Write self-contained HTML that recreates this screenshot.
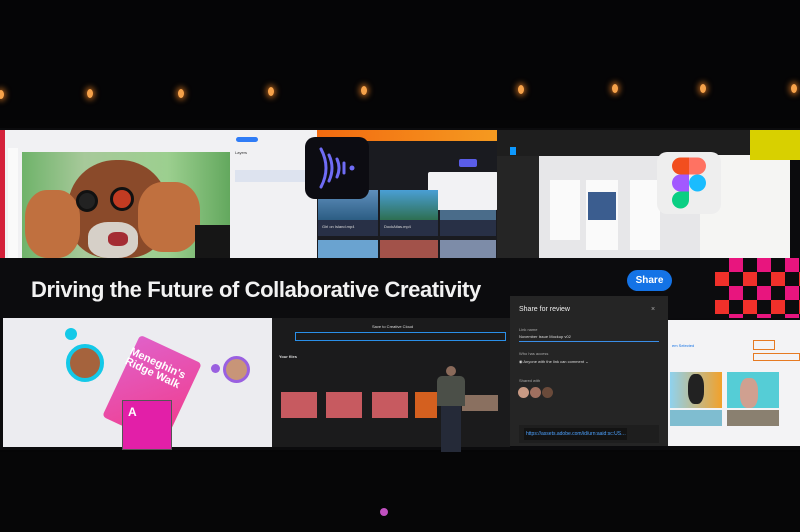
<!DOCTYPE html>
<html><head><meta charset="utf-8"><style>
*{margin:0;padding:0;box-sizing:border-box}
body{width:800px;height:532px;background:#050506;overflow:hidden;position:relative;font-family:"Liberation Sans",sans-serif}
.a{position:absolute}
.l{position:absolute;width:6px;height:9px;border-radius:50%;background:#f6a24a;box-shadow:0 0 6px 2px rgba(255,140,40,.6)}
.t{position:absolute;color:#ddd;font-size:4px;white-space:nowrap}
</style></head><body>
<div class="l" style="left:-2px;top:90px"></div>
<div class="l" style="left:87px;top:89px"></div>
<div class="l" style="left:178px;top:89px"></div>
<div class="l" style="left:268px;top:87px"></div>
<div class="l" style="left:361px;top:86px"></div>
<div class="l" style="left:518px;top:85px"></div>
<div class="l" style="left:612px;top:84px"></div>
<div class="l" style="left:700px;top:84px"></div>
<div class="l" style="left:791px;top:84px"></div>
<div class="a" style="left:0;top:128px;width:800px;height:322px;background:#0b0b0d"></div>
<div class="a" style="left:0;top:130px;width:5px;height:128px;background:#d4213a"></div>
<div class="a" style="left:5px;top:130px;width:312px;height:128px;background:#f1f1f3"></div>
<div class="a" style="left:236px;top:137px;width:22px;height:5px;background:#2f7cf6;border-radius:3px"></div>
<div class="a" style="left:8px;top:148px;width:10px;height:110px;background:#fafafa"></div>
<div class="a" style="left:22px;top:152px;width:208px;height:106px;background:linear-gradient(90deg,#6fb36a,#a7c99a 30%,#9ccf8f 70%,#63a85e)"></div>
<div class="a" style="left:68px;top:160px;width:100px;height:98px;border-radius:48% 48% 40% 40%;background:#8a4a2a"></div>
<div class="a" style="left:25px;top:190px;width:55px;height:68px;border-radius:40%;background:#c0703f"></div>
<div class="a" style="left:138px;top:182px;width:62px;height:70px;border-radius:40%;background:#c0703f"></div>
<div class="a" style="left:88px;top:222px;width:50px;height:36px;background:#d6d0c8;border-radius:40%"></div>
<div class="a" style="left:108px;top:232px;width:20px;height:14px;background:#a42c34;border-radius:40%"></div>
<div class="a" style="left:76px;top:190px;width:22px;height:22px;border-radius:50%;background:#222;border:3px solid #111"></div>
<div class="a" style="left:110px;top:187px;width:24px;height:24px;border-radius:50%;background:#c23b22;border:3px solid #111"></div>
<div class="a" style="left:195px;top:225px;width:35px;height:33px;background:#161616"></div>
<div class="t" style="left:235px;top:150px;color:#333">Layers</div>
<div class="a" style="left:235px;top:170px;width:70px;height:12px;background:#dde3ef"></div>
<div class="a" style="left:317px;top:130px;width:180px;height:11px;background:linear-gradient(90deg,#f26a10,#f59a20)"></div>
<div class="a" style="left:317px;top:141px;width:180px;height:117px;background:#1a1b20"></div>
<div class="a" style="left:459px;top:159px;width:18px;height:8px;background:#5a5de8;border-radius:2px"></div>
<div class="a" style="left:428px;top:172px;width:70px;height:38px;background:#f2f2f4;border-radius:2px"></div>
<div class="a" style="left:318px;top:190px;width:60px;height:30px;background:linear-gradient(#5f8fbd,#2c5d83)"></div>
<div class="a" style="left:380px;top:190px;width:58px;height:30px;background:linear-gradient(#4a9fd5,#2e6f51)"></div>
<div class="a" style="left:440px;top:210px;width:56px;height:10px;background:#4a6c8a"></div>
<div class="a" style="left:318px;top:220px;width:60px;height:16px;background:#283046"></div>
<div class="a" style="left:380px;top:220px;width:58px;height:16px;background:#283046"></div>
<div class="a" style="left:440px;top:220px;width:56px;height:16px;background:#283046"></div>
<div class="t" style="left:322px;top:224px">Girl on Island.mp4</div>
<div class="t" style="left:384px;top:224px">DockAtlas.mp4</div>
<div class="a" style="left:318px;top:240px;width:60px;height:18px;background:#6aa3d0"></div>
<div class="a" style="left:380px;top:240px;width:58px;height:18px;background:#a2524a"></div>
<div class="a" style="left:440px;top:240px;width:56px;height:18px;background:#7d8ca8"></div>
<div class="a" style="left:305px;top:137px;width:64px;height:62px;background:#0c0c12;border-radius:10px"></div>
<svg class="a" style="left:313px;top:145px" width="50" height="46" viewBox="0 0 50 46"><g fill="none" stroke="#6f6cf5" stroke-width="3" stroke-linecap="round"><path d="M8 4 Q18 23 8 42"/><path d="M16 10 Q22 23 16 36"/><path d="M24 14 Q28 23 24 32"/><path d="M31 18 V28"/></g><circle cx="39" cy="23" r="2.5" fill="#6f6cf5"/></svg>
<div class="a" style="left:497px;top:130px;width:253px;height:26px;background:#1e1e1e"></div>
<div class="a" style="left:510px;top:147px;width:6px;height:8px;background:#0d99ff"></div>
<div class="a" style="left:497px;top:156px;width:42px;height:102px;background:#252525"></div>
<div class="a" style="left:539px;top:156px;width:161px;height:102px;background:#e7e7e9"></div>
<div class="a" style="left:550px;top:180px;width:30px;height:60px;background:#fafafa"></div>
<div class="a" style="left:586px;top:180px;width:32px;height:70px;background:#fafafa"></div>
<div class="a" style="left:588px;top:192px;width:28px;height:28px;background:#3b5d8f"></div>
<div class="a" style="left:630px;top:180px;width:30px;height:70px;background:#fafafa"></div>
<div class="a" style="left:700px;top:155px;width:90px;height:103px;background:#f5f5f3"></div>
<div class="a" style="left:750px;top:130px;width:50px;height:30px;background:#d8d000"></div>
<div class="a" style="left:657px;top:152px;width:64px;height:62px;background:#eeeeee;border-radius:10px"></div>
<svg class="a" style="left:672px;top:157px" width="34" height="52" viewBox="0 0 34 51"><path d="M17 0H8.5a8.5 8.5 0 0 0 0 17H17z" fill="#f24e1e"/><path d="M17 0h8.5a8.5 8.5 0 0 1 0 17H17z" fill="#ff7262"/><path d="M17 17H8.5a8.5 8.5 0 0 0 0 17H17z" fill="#a259ff"/><circle cx="25.5" cy="25.5" r="8.5" fill="#1abcfe"/><path d="M17 34H8.5a8.5 8.5 0 1 0 8.5 8.5z" fill="#0acf83"/></svg>
<div class="a" style="left:0;top:258px;width:800px;height:60px;background:#0c0c0e"></div>
<div class="a" style="left:31px;top:277px;color:#f2f2f2;font-size:22px;font-weight:bold;letter-spacing:-.4px;white-space:nowrap">Driving the Future of Collaborative Creativity</div>
<div class="a" style="left:627px;top:270px;width:45px;height:21px;background:#1473e6;border-radius:11px;color:#fff;font-size:10px;font-weight:bold;text-align:center;line-height:21px">Share</div>
<div class="a" style="left:715px;top:258px;width:85px;height:60px;background:
conic-gradient(#e8157e 25%,#0c0c0e 0 50%,#f0302a 0 75%,#0c0c0e 0) 0 0/28px 28px"></div>
<div class="a" style="left:3px;top:318px;width:269px;height:129px;background:#ececf0"></div>
<div class="a" style="left:65px;top:328px;width:12px;height:12px;border-radius:50%;background:#14c9e8"></div>
<div class="a" style="left:66px;top:344px;width:38px;height:38px;border-radius:50%;border:4px solid #14c9e8;background:#a5633d"></div>
<div class="a" style="left:223px;top:356px;width:27px;height:27px;border-radius:50%;border:3px solid #9a60e0;background:#c89578"></div>
<div class="a" style="left:211px;top:364px;width:9px;height:9px;border-radius:50%;background:#9a60e0"></div>
<div class="a" style="left:118px;top:345px;width:68px;height:90px;background:linear-gradient(135deg,#e061c9,#f23a8a);transform:rotate(25deg);border-radius:4px"></div>
<div class="a" style="left:125px;top:358px;color:#fff;font-size:11px;font-weight:bold;transform:rotate(25deg);line-height:11px">Meneghin's<br>Ridge Walk</div>
<div class="a" style="left:122px;top:400px;width:50px;height:50px;background:#e21fa8;border:1px solid #555"></div>
<div class="a" style="left:128px;top:405px;color:#fff;font-size:12px;font-weight:bold">A</div>
<div class="a" style="left:272px;top:318px;width:238px;height:129px;background:#1b1b1c"></div>
<div class="t" style="left:372px;top:324px">Save to Creative Cloud</div>
<div class="a" style="left:295px;top:332px;width:211px;height:9px;border:1px solid #2a8fe8"></div>
<div class="t" style="left:279px;top:354px;font-weight:bold">Your files</div>
<div class="a" style="left:281px;top:392px;width:36px;height:26px;background:#c75a60"></div>
<div class="a" style="left:326px;top:392px;width:36px;height:26px;background:#c75a60"></div>
<div class="a" style="left:372px;top:392px;width:36px;height:26px;background:#c75a60"></div>
<div class="a" style="left:415px;top:392px;width:22px;height:26px;background:#d4601f"></div>
<div class="a" style="left:462px;top:395px;width:36px;height:16px;background:#8a7060"></div>
<div class="a" style="left:446px;top:366px;width:10px;height:10px;border-radius:50%;background:#8a6a5a"></div>
<div class="a" style="left:437px;top:376px;width:28px;height:30px;background:#4b4f48;border-radius:5px 5px 0 0"></div>
<div class="a" style="left:441px;top:406px;width:20px;height:46px;background:#252a38"></div>
<div class="a" style="left:510px;top:296px;width:158px;height:150px;background:#252525"></div>
<div class="a" style="left:519px;top:306px;color:#eee;font-size:7px">Share for review</div>
<div class="t" style="left:651px;top:306px;font-size:7px;color:#aaa">×</div>
<div class="t" style="left:519px;top:327px;color:#aaa">Link name</div>
<div class="t" style="left:519px;top:334px">November Issue Mockup v02</div>
<div class="a" style="left:519px;top:341px;width:140px;height:1px;background:#3a8ee8"></div>
<div class="t" style="left:519px;top:351px;color:#aaa">Who has access</div>
<div class="t" style="left:519px;top:359px">◉ Anyone with the link can comment ⌄</div>
<div class="t" style="left:519px;top:378px;color:#aaa">Shared with</div>
<div class="a" style="left:518px;top:387px;width:11px;height:11px;border-radius:50%;background:#c89a84"></div>
<div class="a" style="left:530px;top:387px;width:11px;height:11px;border-radius:50%;background:#a07060"></div>
<div class="a" style="left:542px;top:387px;width:11px;height:11px;border-radius:50%;background:#6a4a3a"></div>
<div class="a" style="left:519px;top:425px;width:140px;height:18px;background:#1e1e1e"></div>
<div class="a" style="left:524px;top:428px;width:103px;height:12px;background:#131313;color:#4da2ff;font-size:5px;line-height:12px;padding-left:2px;white-space:nowrap;overflow:hidden">https://assets.adobe.com/id/urn:aaid:sc:US…</div>
<div class="a" style="left:668px;top:320px;width:132px;height:126px;background:#f3f3f5"></div>
<div class="t" style="left:672px;top:343px;color:#1473e6">em Selected</div>
<div class="a" style="left:753px;top:340px;width:22px;height:10px;border:1px solid #e67a22"></div>
<div class="a" style="left:753px;top:353px;width:47px;height:8px;border:1px solid #e67a22"></div>
<div class="a" style="left:670px;top:372px;width:52px;height:36px;background:linear-gradient(90deg,#8fd2ee,#f2a12a)"></div>
<div class="a" style="left:688px;top:374px;width:16px;height:30px;background:#222;border-radius:40%"></div>
<div class="a" style="left:727px;top:372px;width:52px;height:36px;background:#55cdd6"></div>
<div class="a" style="left:740px;top:378px;width:18px;height:30px;background:#d0a090;border-radius:40%"></div>
<div class="a" style="left:670px;top:410px;width:52px;height:16px;background:#7fbdd0"></div>
<div class="a" style="left:727px;top:410px;width:52px;height:16px;background:#8a8070"></div>
<div class="a" style="left:0;top:452px;width:800px;height:80px;background:#060607"></div>
<div class="a" style="left:380px;top:508px;width:8px;height:8px;border-radius:50%;background:#c050c0"></div>
</body></html>
